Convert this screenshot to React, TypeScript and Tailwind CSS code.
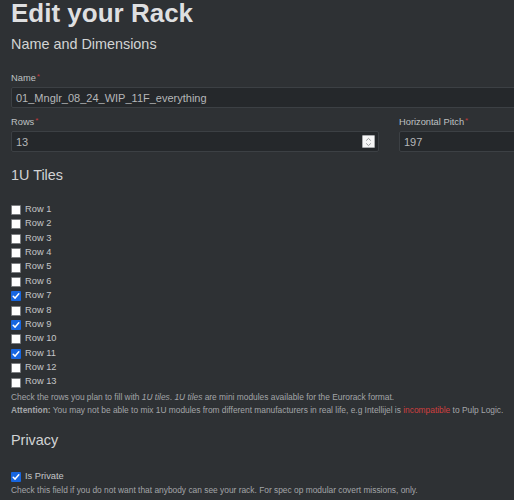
import React from "react";

const font = "font-['Liberation_Sans',Arial,Helvetica,sans-serif]";

function Req() {
  return <span className="text-[#c0393b] text-[8px] align-top relative top-[-1px] ml-[1px]">*</span>;
}

function Box({ checked }: { checked: boolean }) {
  if (checked) {
    return (
      <span className="w-[10px] h-[10px] mt-[2px] bg-[#1766e0] rounded-[1px] flex items-center justify-center shrink-0">
        <svg width="8" height="8" viewBox="0 0 8 8">
          <path d="M1.2 4.2 L3.1 6.1 L6.8 1.8" stroke="#ffffff" strokeWidth="1.5" fill="none" strokeLinecap="round" strokeLinejoin="round" />
        </svg>
      </span>
    );
  }
  return <span className="w-[10px] h-[10px] mt-[2px] bg-white border border-[#7d7f82] rounded-[1px] shrink-0" />;
}

function Check({ label, checked }: { label: string; checked: boolean }) {
  return (
    <div className="h-[14.4px] flex items-center gap-[4px]">
      <Box checked={checked} />
      <span className="text-[9.3px] leading-[14.4px] text-[#c4c6c8]">{label}</span>
    </div>
  );
}

function Input({ value, spinner }: { value: string; spinner?: boolean }) {
  return (
    <div className="mt-[3px] h-[21px] bg-[#25282b] border border-[#3c4044] rounded-[2px] flex items-center pl-[4px] pr-[3px]">
      <span className="text-[11px] text-[#b5b7b9] flex-1">{value}</span>
      {spinner && (
        <span className="w-[13px] h-[13px] bg-[#f7f7f7] border border-[#a9abad] rounded-[1px] flex items-center justify-center">
          <svg width="7" height="10" viewBox="0 0 7 10">
            <path d="M1.2 3.6 L3.5 1.4 L5.8 3.6" stroke="#8a8c8e" strokeWidth="0.9" fill="none" />
            <path d="M1.2 6.4 L3.5 8.6 L5.8 6.4" stroke="#8a8c8e" strokeWidth="0.9" fill="none" />
          </svg>
        </span>
      )}
    </div>
  );
}

export default function App() {
  const checked = [7, 9, 11];
  return (
    <div className={`w-[514px] h-[500px] overflow-hidden bg-[#2e3134] ${font}`}>
      <div className="pl-[11px] w-[767px]">
        <div className="mt-[-2.5px] h-[30px] leading-[30px] text-[26px] font-bold text-[#dedfe0]">Edit your Rack</div>
        <div className="mt-[6.5px] h-[20px] leading-[20px] text-[14.4px] text-[#d2d4d5]">Name and Dimensions</div>

        <div className="mt-[18.3px] h-[12px] leading-[12px] text-[9.3px] text-[#bfc1c3]">
          Name<Req />
        </div>
        <Input value="01_Mnglr_08_24_WIP_11F_everything" />

        <div className="grid grid-cols-2 gap-x-[20px]">
          <div>
            <div className="mt-[8px] h-[12px] leading-[12px] text-[9.3px] text-[#bfc1c3]">
              Rows<Req />
            </div>
            <Input value="13" spinner />
          </div>
          <div>
            <div className="mt-[8px] h-[12px] leading-[12px] text-[9.3px] text-[#bfc1c3]">
              Horizontal Pitch<Req />
            </div>
            <Input value="197" />
          </div>
        </div>

        <div className="mt-[12.7px] h-[20px] leading-[20px] text-[14.4px] text-[#d2d4d5]">1U Tiles</div>

        <div className="mt-[16.8px] flex flex-col">
          {Array.from({ length: 13 }, (_, i) => i + 1).map((n) => (
            <Check key={n} label={`Row ${n}`} checked={checked.includes(n)} />
          ))}
        </div>

        <div className="mt-[1.7px] text-[8.4px] leading-[13.7px] text-[#a3a5a8]">
          <div>
            Check the rows you plan to fill with <i>1U tiles</i>. <i>1U tiles</i> are mini modules available for the Eurorack format.
          </div>
          <div>
            <b>Attention:</b> You may not be able to mix 1U modules from different manufacturers in real life, e.g Intellijel is{" "}
            <span className="text-[#cf3f3f]">incompatible</span> to Pulp Logic.
          </div>
        </div>

        <div className="mt-[12.4px] h-[20px] leading-[20px] text-[14.4px] text-[#d2d4d5]">Privacy</div>

        <div className="mt-[18.5px]">
          <Check label="Is Private" checked />
        </div>
        <div className="mt-[0.3px] text-[8.4px] leading-[13.7px] text-[#a3a5a8]">
          Check this field if you do not want that anybody can see your rack. For spec op modular covert missions, only.
        </div>
      </div>
    </div>
  );
}
